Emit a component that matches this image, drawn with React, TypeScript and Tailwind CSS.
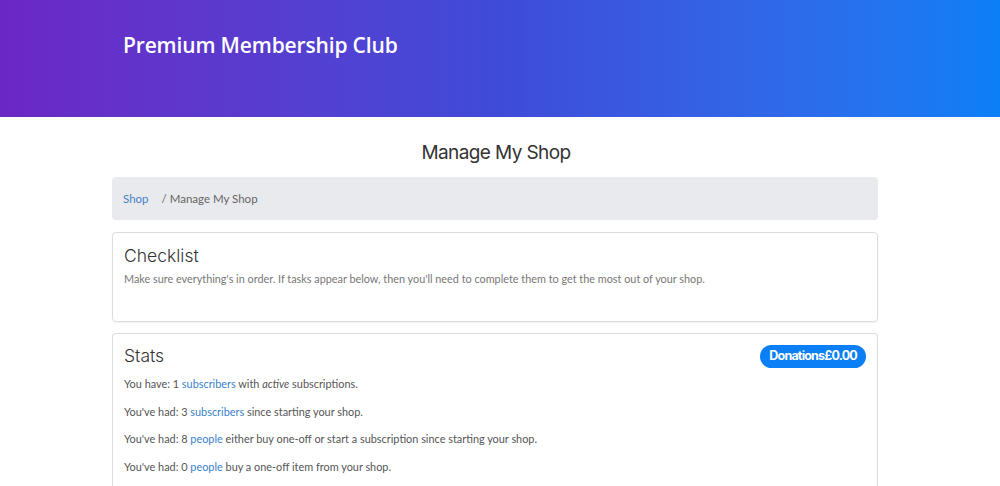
import React from "react";

const Stat = ({ children }: { children: React.ReactNode }) => (
  <p className="text-[10.9px] leading-[16px] text-[#555] mb-[11.5px]">{children}</p>
);

const A = ({ children }: { children: React.ReactNode }) => (
  <a href="#" className="text-[#3b82cc]">
    {children}
  </a>
);

const App = () => {
  return (
    <div className="min-h-[486px] bg-white font-['Lato',sans-serif]">
      {/* header */}
      <div className="h-[117px] bg-gradient-to-r from-[#6b27c5] via-[#3f4bd8] to-[#0a7ff6]">
        <h1 className="pl-[123px] pt-[30px] text-[21px] font-semibold text-white font-['Open_Sans',sans-serif] tracking-[-0.15px]">
          Premium Membership Club
        </h1>
      </div>

      <div className="ml-[112px] w-[766px]">
        <h2 className="pt-[140px] -mt-[117px] text-center text-[19px] leading-[26px] text-[#333] font-['Inter',sans-serif] font-normal tracking-[-0.6px] pl-[2px]">
          Manage My Shop
        </h2>

        {/* breadcrumb */}
        <div className="mt-[11px] h-[43px] rounded bg-[#e9eaee] flex items-center px-[11px] pt-[1px] text-[11.5px] text-[#666]">
          <a href="#" className="text-[#4a80c4]">Shop</a>
          <span className="ml-[13px]">/ Manage My Shop</span>
        </div>

        {/* checklist */}
        <div className="mt-[12px] h-[90px] rounded border border-[#dcdcdc] shadow-[0_1px_2px_rgba(0,0,0,0.06)] px-[11px] pt-[11px]">
          <h3 className="text-[17.5px] leading-[24px] text-[#333] font-['Inter',sans-serif] font-light">Checklist</h3>
          <p className="mt-[3px] text-[10.85px] text-[#777]">
            Make sure everything's in order. If tasks appear below, then you'll need to complete them to get the most out of your shop.
          </p>
        </div>

        {/* stats */}
        <div className="mt-[11px] rounded-t border border-b-0 border-[#dcdcdc] px-[11px] pt-[10px] pb-[4px]">
          <div className="flex items-center justify-between">
            <h3 className="text-[17.5px] leading-[24px] text-[#333] font-['Inter',sans-serif] font-light">Stats</h3>
            <span className="rounded-full bg-[#0a7ff6] px-[9px] h-[23px] flex items-center text-white text-[12.5px] font-bold tracking-[-0.8px] font-['Inter',sans-serif]">
              Donations£0.00
            </span>
          </div>
          <div className="mt-[8px]">
            <Stat>
              You have: 1 <A>subscribers</A> with <i>active</i> subscriptions.
            </Stat>
            <Stat>
              You've had: 3 <A>subscribers</A> since starting your shop.
            </Stat>
            <Stat>
              You've had: 8 <A>people</A> either buy one-off or start a subscription since starting your shop.
            </Stat>
            <Stat>
              You've had: 0 <A>people</A> buy a one-off item from your shop.
            </Stat>
          </div>
        </div>
      </div>
    </div>
  );
};

export default App;
